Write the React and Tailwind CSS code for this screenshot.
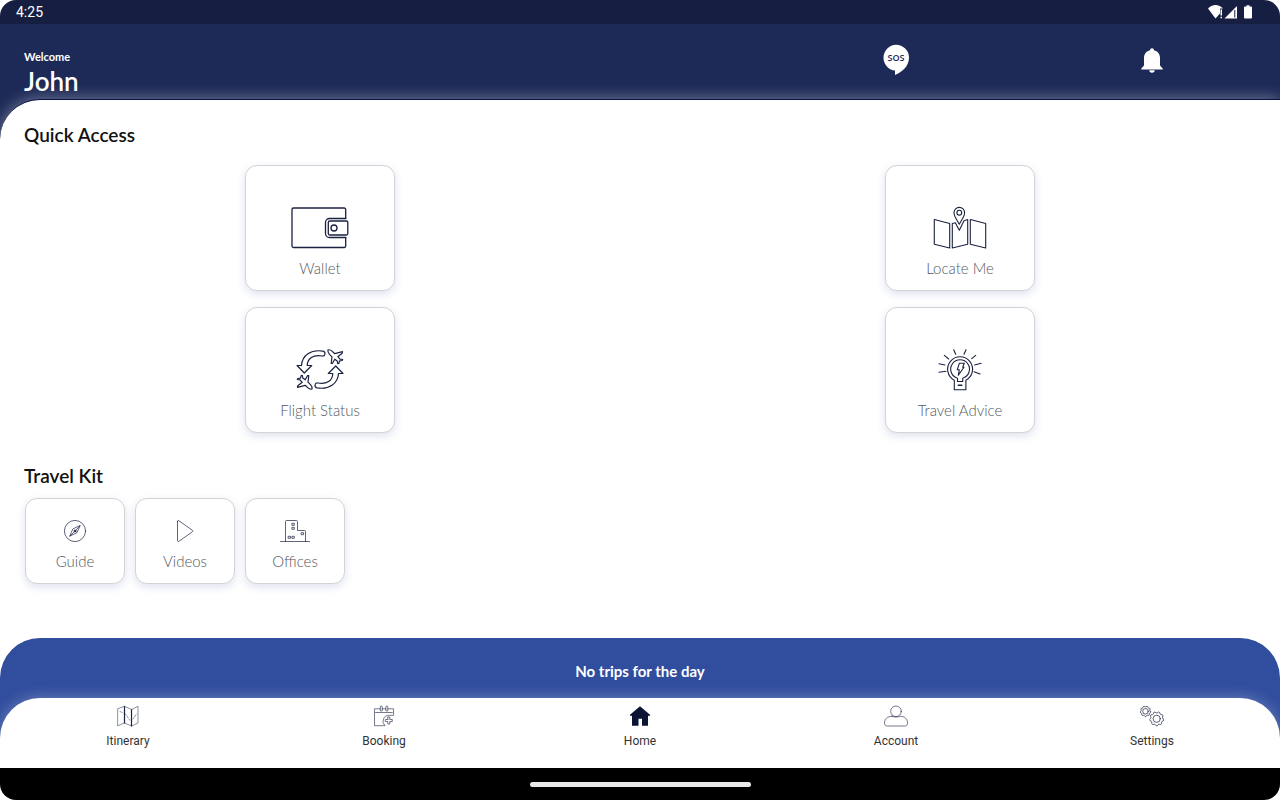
import clsx from 'clsx';

const INK = '#1b2140';

function LineIcon({ width, height, stroke = 1, children }) {
    return (
        <svg
            width={width}
            height={height}
            viewBox={`0 0 ${width} ${height}`}
            fill="none"
            stroke={INK}
            strokeWidth={stroke}
            strokeLinejoin="round"
            strokeLinecap="round"
            aria-hidden="true"
        >
            {children}
        </svg>
    );
}

/* Quick access icons */
function WalletIcon() {
    return (
        <LineIcon width={60} height={44} stroke={1.3}>
            <path d="M55.700 12.500V3.500a1.500 1.500 0 0 0-1.500-1.500H3.500a1.500 1.500 0 0 0-1.500 1.500v36.500a1.500 1.500 0 0 0 1.500 1.500H54.200a1.500 1.500 0 0 0 1.500-1.500V31.500" />
            <path d="M55.700 12.500H39.500a4 4 0 0 0-4 4v11a4 4 0 0 0 4 4H55.700" />
            <rect x="38.300" y="15" width="19.500" height="14" rx="1.500" />
            <circle cx="44" cy="22" r="3" />
        </LineIcon>
    );
}

function LocateIcon() {
    return (
        <LineIcon width={60} height={44} stroke={1.1}>
            <path d="M4.300 13.500 19.700 17.500V42L4.300 38.300z" />
            <path d="M25.300 16.700 22.300 17.500V42L37.700 38.300V13.500L34 14.700 29.300 24.300 25.300 16.700" />
            <path d="M40.300 13.500 55.700 17.500V42L40.300 38.300z" />
            <path d="M29.300 18.300C27 13.800 24 10.500 24 6.700a5.300 5.300 0 0 1 10.600 0c0 3.800-3 7.100-5.300 11.600z" />
            <circle cx="29.300" cy="6.700" r="2.400" />
        </LineIcon>
    );
}

function FlightHalf() {
    return (
        <>
            <path d="M33 3.200C21 1 12 7.500 11.500 17.500H7L14.300 25 21.700 17.500H17.200C17.500 10.500 23 6.200 32.300 8c3.200.4 3.700-4.100.7-4.800z" />
            <path d="M38 1.800C39.500 1.600 41.200 2.200 42.300 3.300L44.800 5.700 52.500 3.700 52.200 5.200 47.800 8.700 50 11.200 52.700 11.500 52.200 12.500 49.500 12.800 48.800 15.500 47.700 15.700 47.200 13 44.800 11.200 42.500 15.300 41.200 15.500 42 8.800 39.500 6.300C38.300 5 37.500 3.500 38 1.800z" />
        </>
    );
}

function FlightIcon() {
    return (
        <LineIcon width={60} height={44} stroke={1.2}>
            <FlightHalf />
            <g transform="rotate(180 30 21.500)">
                <FlightHalf />
            </g>
        </LineIcon>
    );
}

function AdviceIcon() {
    return (
        <LineIcon width={60} height={44} stroke={1.1}>
            <path d="M24.300 32.300a12.500 12.500 0 1 1 11.600 0V41.700H24.300z" />
            <path d="M27.500 33.500V30.200a9.400 9.400 0 1 1 5.200 0V33.500z" />
            <path d="M29.300 15.300H34.300L32.700 19.300H34L28.300 27.300 29.300 21.700H27.300z" />
            <path d="M28.300 37.200H31.800" strokeWidth="1.600" />
            <path d="M9 15.700 15 17M9 24.300 16 23.300M14.300 7.300 18.700 11M23.700 1.700 25.700 6.300M36 1.700 34 6.300M45.700 7.300 41.700 10.700M51 15.300 44.700 17M50 26 44 23.700" />
        </LineIcon>
    );
}

/* Travel kit icons */
function GuideIcon() {
    return (
        <LineIcon width={32} height={24} stroke={0.7}>
            <circle cx="16" cy="12" r="10.600" />
            <path d="M21 6.800 18 13.700 10.700 17.200 13.700 10.300z" />
            <circle cx="16" cy="12" r="1" fill={INK} />
            <path d="M20.800 7 17 11M11 17l4-4" />
        </LineIcon>
    );
}

function VideosIcon() {
    return (
        <LineIcon width={32} height={24} stroke={0.7}>
            <path d="M8.500 2.500v19c0 1 .6 1.300 1.400.8l13.500-9.500c.6-.4.6-1.100 0-1.500L9.900 1.700c-.8-.5-1.400-.2-1.400.8z" />
        </LineIcon>
    );
}

function OfficesIcon() {
    return (
        <LineIcon width={32} height={24} stroke={0.7}>
            <path d="M1.500 22.500H30.500M6.500 22.500V2.500a1 1 0 0 1 1-1h10a1 1 0 0 1 1 1v9h7a1 1 0 0 1 1 1v10" />
            <path d="M13.300 4.300h2v2h-2zM13.300 8.300h2v2h-2zM22.500 13.700h2v2h-2zM9.500 17.300h2v2h-2zM13.300 17.300h2v2h-2z" />
        </LineIcon>
    );
}

/* Tab bar icons */
function ItineraryIcon() {
    return (
        <LineIcon width={24} height={22} stroke={0.5}>
            <path d="M2 3.700 8.300 1.300 15.700 4.500 22 1.300V18L15.700 21 8.300 18 2 20.700z" />
            <path d="M8.500 1.500V18M15.500 4.500V21" strokeWidth="1.200" />
            <path d="M4 6.500 7 8M9.500 9 14 15.500M17 14 20.500 9" strokeDasharray="1.500 1.500" />
        </LineIcon>
    );
}

function BookingIcon() {
    return (
        <LineIcon width={24} height={22} stroke={0.6}>
            <path d="M8.300 3.800H2.500V20.700H12.700M16 3.800H21.500V9.500M10.300 3.800h3.600" />
            <path d="M3.500 7.500H20.300" />
            <path d="M8.300 5.500V2a1 1 0 0 1 2 0v3.500zM13.800 5.500V2a1 1 0 0 1 2 0v3.500z" />
            <path d="M21.500 10.300H17.500a6 6 0 0 0-4.800 10.200" />
            <path d="M15.800 12h2v2.500h2.500v2h-2.500V19h-2v-2.500h-2.500v-2h2.500z" />
        </LineIcon>
    );
}

function HomeIcon() {
    return (
        <svg width="24" height="22" viewBox="0 0 24 22" fill="#0b1533" aria-hidden="true">
            <path d="M12 1.200 22.300 9.900 21.200 11.300 20 10.500V20.700H14V13.800H10.500V20.700H4V10.500L2.800 11.300 1.700 9.900z" />
        </svg>
    );
}

function AccountIcon() {
    return (
        <LineIcon width={24} height={22} stroke={0.6}>
            <circle cx="12" cy="6.300" r="5.300" />
            <path d="M8 11.300C3 11.300.5 14 .5 18c0 2 1 3 3 3h17c2 0 3-1 3-3 0-4-2.500-6.700-7.500-6.700-2.500 1-5.500 1-8 0z" />
        </LineIcon>
    );
}

function gearPath(cx, cy, r, teeth) {
    const points = [];
    for (let i = 0; i < teeth * 4; i++) {
        const radius = i % 4 < 2 ? r : r * 0.85;
        const angle = ((i + 0.5) / (teeth * 4)) * Math.PI * 2;
        points.push(`${(cx + radius * Math.cos(angle)).toFixed(2)} ${(cy + radius * Math.sin(angle)).toFixed(2)}`);
    }
    return `M${points.join('L')}z`;
}

function SettingsIcon() {
    return (
        <LineIcon width={24} height={22} stroke={0.7}>
            <path d={gearPath(5.5, 6.3, 5.2, 9)} />
            <circle cx="5.500" cy="6.300" r="2.800" />
            <path d={gearPath(16.7, 13.8, 7, 9)} />
            <circle cx="16.700" cy="13.800" r="3.600" />
        </LineIcon>
    );
}

/* Header and status bar icons */
function SosIcon() {
    return (
        <svg width="28" height="32" viewBox="0 0 28 32" aria-hidden="true">
            <path d="M14 .7a13 13 0 0 0-1 25.900V31c7-2.700 14-9 14-17.300A13 13 0 0 0 14 .7z" fill="#fff" />
            <text x="14" y="17" textAnchor="middle" fontSize="9" fontFamily="'Open Sans', sans-serif" fontWeight="600" fill="#1c2957">SOS</text>
        </svg>
    );
}

function BellIcon() {
    return (
        <svg width="22" height="26" viewBox="0 0 22 26" fill="#fff" aria-hidden="true">
            <path d="M11 .2a1.900 1.900 0 0 1 1.900 2.100C16.700 3.200 19 6.200 19 10v7.500l2.700 3v.9H.3v-.9l2.700-3V10C3 6.200 5.300 3.200 9.100 2.300A1.900 1.900 0 0 1 11 .2zM8.300 22.200h5.400a2.700 2.500 0 0 1-5.400 0z" />
        </svg>
    );
}

function StatusIcons() {
    return (
        <svg width="46" height="16" viewBox="0 0 46 16" fill="#fff" aria-hidden="true">
            <path d="M0 4.500C4-.2 11-.2 15 4.500h-3v5L7.500 14.500z" />
            <path d="M12.500 5.500h1.500v6h-1.500zM12.500 12.800h1.500v1.500h-1.500z" />
            <path d="M29 2v12.500H16.500z" />
            <path d="M26.300 6h1v7.500h-1z" fill="#161f41" />
            <path d="M38.500 1.200h3v1.300H43a1 1 0 0 1 1 1v10a1 1 0 0 1-1 1h-6a1 1 0 0 1-1-1v-10a1 1 0 0 1 1-1h1.500z" />
        </svg>
    );
}

const quickAccess = [
    { label: 'Wallet', icon: WalletIcon },
    { label: 'Locate Me', icon: LocateIcon },
    { label: 'Flight Status', icon: FlightIcon },
    { label: 'Travel Advice', icon: AdviceIcon },
];

const travelKit = [
    { label: 'Guide', icon: GuideIcon },
    { label: 'Videos', icon: VideosIcon },
    { label: 'Offices', icon: OfficesIcon },
];

const tabs = [
    { label: 'Itinerary', icon: ItineraryIcon },
    { label: 'Booking', icon: BookingIcon },
    { label: 'Home', icon: HomeIcon },
    { label: 'Account', icon: AccountIcon },
    { label: 'Settings', icon: SettingsIcon },
];

function Card({ item, className }) {
    const Icon = item.icon;
    return (
        <button
            type="button"
            className={clsx(
                'flex flex-col items-center gap-2 rounded-xl border border-[#d3d3d6] bg-white pb-3 text-[15px] leading-5 font-light text-[#555a60] shadow-[0_3px_8px_rgba(48,77,158,0.16)]',
                className
            )}
        >
            <Icon />
            {item.label}
        </button>
    );
}

export default function App() {
    return (
        <div className="min-h-screen flex flex-col overflow-hidden rounded-2xl bg-white font-[Lato,sans-serif]">
            {/* Status bar */}
            <div className="h-6 flex items-center justify-between bg-[#161f41] pl-4 pr-[26px] font-[Roboto,sans-serif] text-sm text-white">
                <span>4:25</span>
                <StatusIcons />
            </div>

            {/* Header */}
            <header className="grid grid-cols-5 bg-[#1d2a57] pb-0.5 text-white">
                <div className="col-span-3 pl-6 pt-[25px]">
                    <p className="text-[11px] leading-4 font-bold">Welcome</p>
                    <h1 className="text-[26px] leading-8 font-semibold">John</h1>
                </div>
                <div className="flex items-start justify-center pt-5">
                    <button type="button" aria-label="SOS"><SosIcon /></button>
                </div>
                <div className="flex items-start justify-center pt-6">
                    <button type="button" aria-label="Notifications"><BellIcon /></button>
                </div>
            </header>

            <div className="flex flex-1 flex-col bg-[linear-gradient(#1d2a57_60px,#fff_60px)]">
                <main className="flex-1 rounded-tl-[40px] border-t border-[#0a0f45] bg-white px-6 pt-[23px] pb-6 shadow-[0_0_16px_rgba(255,255,255,0.4)]">
                    <h2 className="text-[19px] leading-6 font-semibold text-[#111]">Quick Access</h2>
                    <div className="-mx-6 mt-[18px] grid grid-cols-2 justify-items-center gap-y-4">
                        {quickAccess.map((item) => (
                            <Card key={item.label} item={item} className="w-[150px] pt-10" />
                        ))}
                    </div>

                    <h2 className="mt-[31px] text-[19px] leading-6 font-semibold text-[#111]">Travel Kit</h2>
                    <div className="mt-2.5 ml-px flex gap-2.5">
                        {travelKit.map((item) => (
                            <Card key={item.label} item={item} className="w-[100px] pt-5" />
                        ))}
                    </div>
                </main>
            </div>

            {/* Trips banner and tabs */}
            <section className="rounded-t-[40px] bg-[#304d9e]">
                <p className="pt-[23px] pb-[17px] text-center text-[15px] leading-5 font-bold text-white">No trips for the day</p>
                <nav className="grid grid-cols-5 rounded-t-[40px] bg-white pt-[7px] pb-[19px] shadow-[0_0_16px_rgba(255,255,255,0.3)]">
                    {tabs.map(({ label, icon: Icon }) => (
                        <a
                            key={label}
                            href={`#${label.toLowerCase()}`}
                            className="flex flex-col items-center gap-1.5 font-[Roboto,sans-serif] text-xs leading-4 text-[#333]"
                        >
                            <Icon />
                            {label}
                        </a>
                    ))}
                </nav>
            </section>

            {/* Gesture bar */}
            <div className="h-8 flex items-center justify-center bg-black">
                <div className="h-[5px] w-[221px] rounded-full bg-[#e8e8e8]"></div>
            </div>
        </div>
    );
}
